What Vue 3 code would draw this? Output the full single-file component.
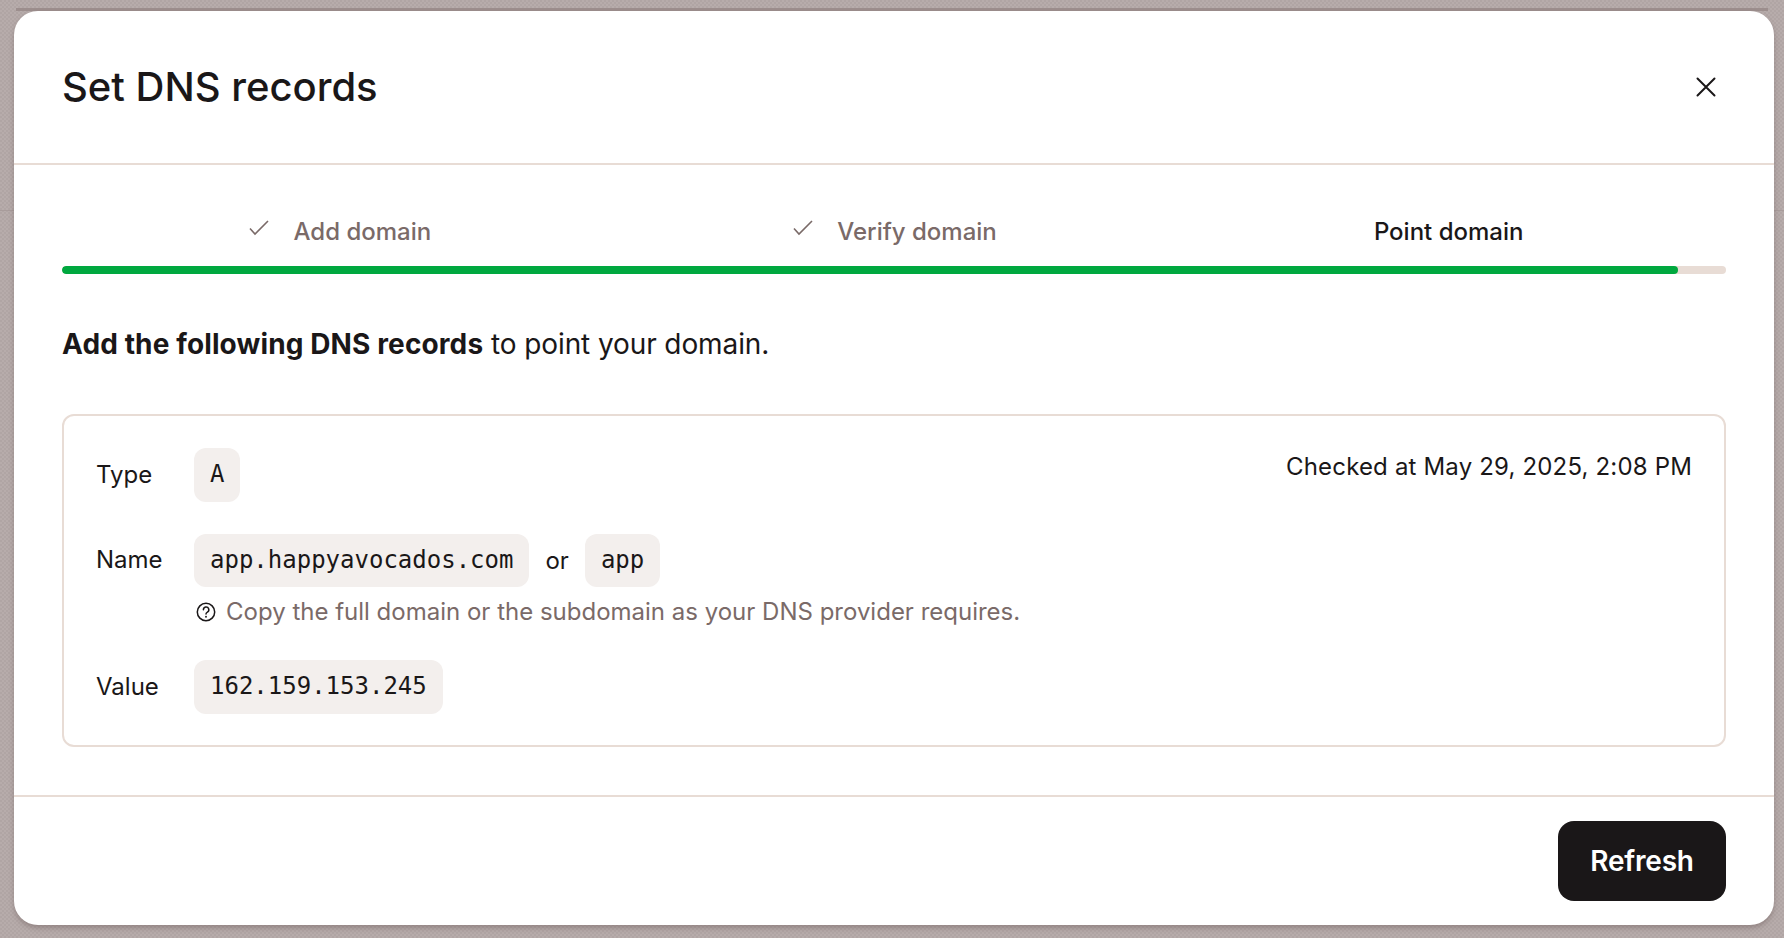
<script setup>
const steps = [
  { label: 'Add domain', done: true },
  { label: 'Verify domain', done: true },
  { label: 'Point domain', done: false },
]
</script>

<template>
  <div class="page">
    <div class="backdrop-line"></div>
    <div class="backdrop-band"></div>
    <section class="modal">
      <header class="modal-head">
        <h1>Set DNS records</h1>
        <svg class="close" width="24" height="24" viewBox="0 0 24 24" fill="none" stroke="#1a1718" stroke-width="2" stroke-linecap="round">
          <path d="M3.5 3.5 20.5 20.5M20.5 3.5 3.5 20.5" />
        </svg>
      </header>
      <div class="modal-body">
        <div class="steps">
          <div v-for="s in steps" :key="s.label" class="step" :class="{ current: !s.done }">
            <svg v-if="s.done" class="check" width="22" height="16" viewBox="0 0 22 16" fill="none" stroke="#7a6a68" stroke-width="1.6">
              <path d="M3 8.5 8 14 21 1" />
            </svg>
            <span>{{ s.label }}</span>
          </div>
        </div>
        <div class="track"><div class="fill"></div></div>
        <p class="lead"><strong>Add the following DNS records</strong> to point your domain.</p>
        <div class="card">
          <div class="checked">Checked at May 29, 2025, 2:08 PM</div>
          <div class="rows">
            <div class="row">
              <span class="label">Type</span>
              <code class="chip">A</code>
            </div>
            <div class="row-group">
              <div class="row">
                <span class="label">Name</span>
                <code class="chip">app.happyavocados.com</code>
                <span class="or">or</span>
                <code class="chip">app</code>
              </div>
              <div class="help">
                <svg width="20" height="20" viewBox="0 0 20 20" fill="none" stroke="#1a1718" stroke-width="1.5" stroke-linecap="round">
                  <circle cx="10" cy="10" r="8.7" />
                  <path d="M7.4 7.8a2.7 2.7 0 1 1 4 2.3c-.9.5-1.4 1-1.4 1.9" />
                  <path d="M10 14.7v.1" stroke-width="1.9" />
                </svg>
                <span>Copy the full domain or the subdomain as your DNS provider requires.</span>
              </div>
            </div>
            <div class="row">
              <span class="label">Value</span>
              <code class="chip">162.159.153.245</code>
            </div>
          </div>
        </div>
      </div>
      <footer class="modal-foot">
        <button class="refresh" type="button">Refresh</button>
      </footer>
    </section>
  </div>
</template>

<style>
html, body { margin: 0; background: #b3a8a7; }
</style>

<style scoped>
.page {
  position: relative;
  width: 1784px;
  height: 938px;
  box-sizing: border-box;
  padding: 11px 10px 13px 14px;
  overflow: hidden;
  background-color: #b3a8a7;
  background-image: conic-gradient(#b7acab 25%, #b0a5a4 0 50%, #b7acab 0 75%, #b0a5a4 0);
  background-size: 4px 4px;
  font-family: Inter, "Liberation Sans", sans-serif;
  color: #1a1718;
}
.backdrop-line {
  position: absolute;
  left: 0;
  right: 0;
  top: 210px;
  height: 1px;
  background: #a89c9b;
}
.backdrop-band {
  position: absolute;
  left: 16px;
  right: 16px;
  top: 8px;
  height: 3px;
  background: #9c8e8d;
}
.modal {
  position: relative;
  display: flex;
  flex-direction: column;
  width: 1760px;
  height: 914px;
  background: #fff;
  border-radius: 24px;
  box-shadow: 0 3px 5px rgba(90, 70, 70, 0.35);
}
.modal-head {
  flex: none;
  display: flex;
  align-items: center;
  justify-content: space-between;
  height: 152px;
  padding: 0 48px;
  border-bottom: 2px solid #e8dcd5;
}
h1 {
  margin: 0;
  font-size: 40px;
  font-weight: 500;
  line-height: 56px;
}
.close { margin-right: 8px; }
.modal-body {
  flex: 1;
  min-height: 0;
  padding: 48px;
}
.steps {
  display: grid;
  grid-template-columns: repeat(3, 1fr);
  height: 53px;
}
.step {
  display: flex;
  justify-content: center;
  gap: 24px;
  font-size: 24px;
  font-weight: 500;
  line-height: 38px;
  color: #7a6a68;
}
.step.current { color: #1a1718; }
.check { margin-top: 7px; }
.track {
  height: 8px;
  border-radius: 4px;
  background: #e8dcd5;
  overflow: hidden;
}
.fill {
  width: 1616px;
  height: 100%;
  border-radius: 4px;
  background: #00a83f;
}
.lead {
  margin: 50px 0;
  font-size: 28px;
  line-height: 40px;
  letter-spacing: -0.1px;
}
.lead strong {
  font-weight: 700;
  letter-spacing: 0.12px;
}
.card {
  position: relative;
  padding: 32px 32px 31px;
  border: 2px solid #e8dcd5;
  border-radius: 12px;
}
.checked {
  position: absolute;
  top: 33px;
  right: 32px;
  font-size: 24px;
  line-height: 36px;
  letter-spacing: 0.17px;
}
.rows {
  display: flex;
  flex-direction: column;
  gap: 32px;
}
.row {
  display: flex;
  align-items: center;
  font-size: 24px;
}
.label {
  width: 98px;
  padding-bottom: 1px;
}
.chip {
  box-sizing: border-box;
  height: 53.5px;
  padding: 0 16px;
  border-radius: 12px;
  background: #f3efed;
  font-family: "DejaVu Sans Mono", monospace;
  font-size: 24px;
  line-height: 52px;
}
.or { margin: 0 16px; }
.help {
  display: flex;
  align-items: center;
  gap: 10px;
  margin: 8px 0 0 98px;
  padding-left: 2px;
  font-size: 24px;
  line-height: 33px;
  color: #7a6a68;
}
.modal-foot {
  flex: none;
  display: flex;
  justify-content: flex-end;
  padding: 24px 48px;
  border-top: 2px solid #e8dcd5;
}
.refresh {
  width: 168px;
  height: 80px;
  border: 0;
  border-radius: 16px;
  background: #1a1718;
  color: #fff;
  font-family: Inter, "Liberation Sans", sans-serif;
  font-size: 28px;
  font-weight: 600;
  letter-spacing: -0.2px;
}
</style>
